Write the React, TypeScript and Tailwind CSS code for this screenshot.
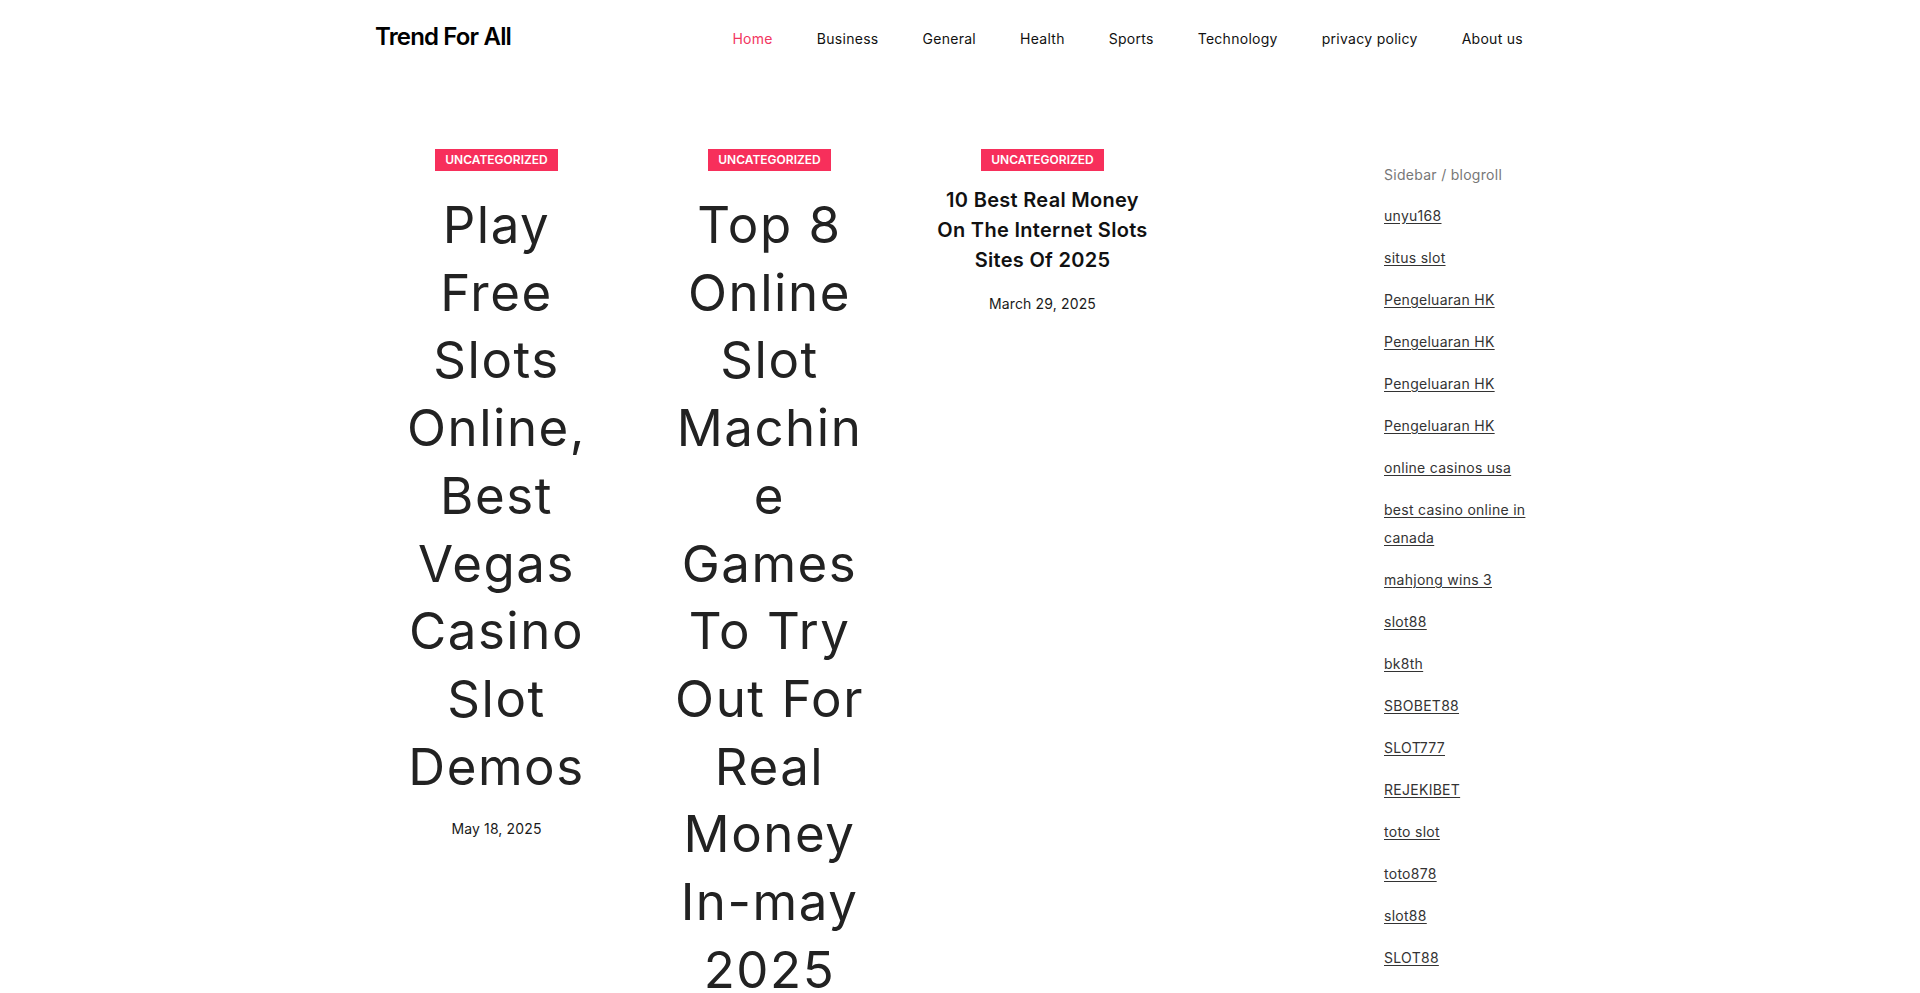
import React from "react";

const FONT = { fontFamily: "Inter, 'Open Sans', 'Liberation Sans', sans-serif" };

const navItems = ["Home", "Business", "General", "Health", "Sports", "Technology", "privacy policy", "About us"];

const links: string[][] = [
  ["unyu168"],
  ["situs slot"],
  ["Pengeluaran HK"],
  ["Pengeluaran HK"],
  ["Pengeluaran HK"],
  ["Pengeluaran HK"],
  ["online casinos usa"],
  ["best casino online in", "canada"],
  ["mahjong wins 3"],
  ["slot88"],
  ["bk8th"],
  ["SBOBET88"],
  ["SLOT777"],
  ["REJEKIBET"],
  ["toto slot"],
  ["toto878"],
  ["slot88"],
  ["SLOT88"],
];

function Badge() {
  return (
    <div className="flex justify-center">
      <span className="inline-block h-[22px] px-[10px] bg-[#f72f5b] text-white text-[12px] leading-[22px] font-semibold uppercase">
        Uncategorized
      </span>
    </div>
  );
}

function BigPost({ lines, date }: { lines: string[]; date: string }) {
  return (
    <div className="px-[30px] text-center">
      <Badge />
      <h2 className="mt-[20px] text-[51px] leading-[67.7px] font-normal tracking-[0.03em] text-[#222222]">
        {lines.map((l, i) => (
          <div key={i} className="whitespace-nowrap">
            {l}
          </div>
        ))}
      </h2>
      <div className="mt-[18px] text-[14px] leading-[21px] tracking-[0.01em] text-[#1a1a1a]">{date}</div>
    </div>
  );
}

export default function App() {
  return (
    <div className="min-h-screen bg-white text-[#222]" style={FONT}>
      <header className="mx-auto w-[1200px] h-[75px] px-[15px] flex items-start justify-between">
        <div className="mt-[19px] text-[24px] leading-[36px] font-semibold text-black tracking-[-0.035em]">
          Trend For All
        </div>
        <nav className="mt-[28px] flex">
          {navItems.map((n, i) => (
            <a
              key={n}
              href="#"
              className={`px-[22px] text-[14px] leading-[21px] tracking-[0.02em] ${i === 0 ? "text-[#f2365f]" : "text-[#111111]"}`}
            >
              {n}
            </a>
          ))}
        </nav>
      </header>

      <main className="mx-auto w-[1200px] pt-[74px] flex items-start">
        <div className="w-[819px] grid grid-cols-3">
          <BigPost
            lines={["Play", "Free", "Slots", "Online,", "Best", "Vegas", "Casino", "Slot", "Demos"]}
            date="May 18, 2025"
          />
          <BigPost
            lines={["Top 8", "Online", "Slot", "Machin", "e", "Games", "To Try", "Out For", "Real", "Money", "In-may", "2025"]}
            date="May 2025"
          />
          <div className="px-[30px] text-center">
            <Badge />
            <h2 className="mt-[14px] text-[20px] leading-[30px] font-semibold tracking-[0.015em] text-[#111111]">
              <div className="whitespace-nowrap">10 Best Real Money</div>
              <div className="whitespace-nowrap">On The Internet Slots</div>
              <div className="whitespace-nowrap">Sites Of 2025</div>
            </h2>
            <div className="mt-[18px] text-[14px] leading-[21px] tracking-[0.01em] text-[#1a1a1a]">March 29, 2025</div>
          </div>
        </div>

        <aside className="ml-auto w-[176px] pr-[15px] mt-[15px]">
          <div className="text-[14px] leading-[21px] tracking-[0.02em] text-[#777777]">Sidebar / blogroll</div>
          <ul className="mt-[17px] flex flex-col gap-[14px]">
            {links.map((l, i) => (
              <li key={i} className="text-[14px] leading-[28px] tracking-[0.02em]">
                <a href="#" className="underline text-[#333333] underline-offset-[2px]">
                  {l.map((part, j) => (
                    <React.Fragment key={j}>
                      {j > 0 && <br />}
                      {part}
                    </React.Fragment>
                  ))}
                </a>
              </li>
            ))}
          </ul>
        </aside>
      </main>
    </div>
  );
}
